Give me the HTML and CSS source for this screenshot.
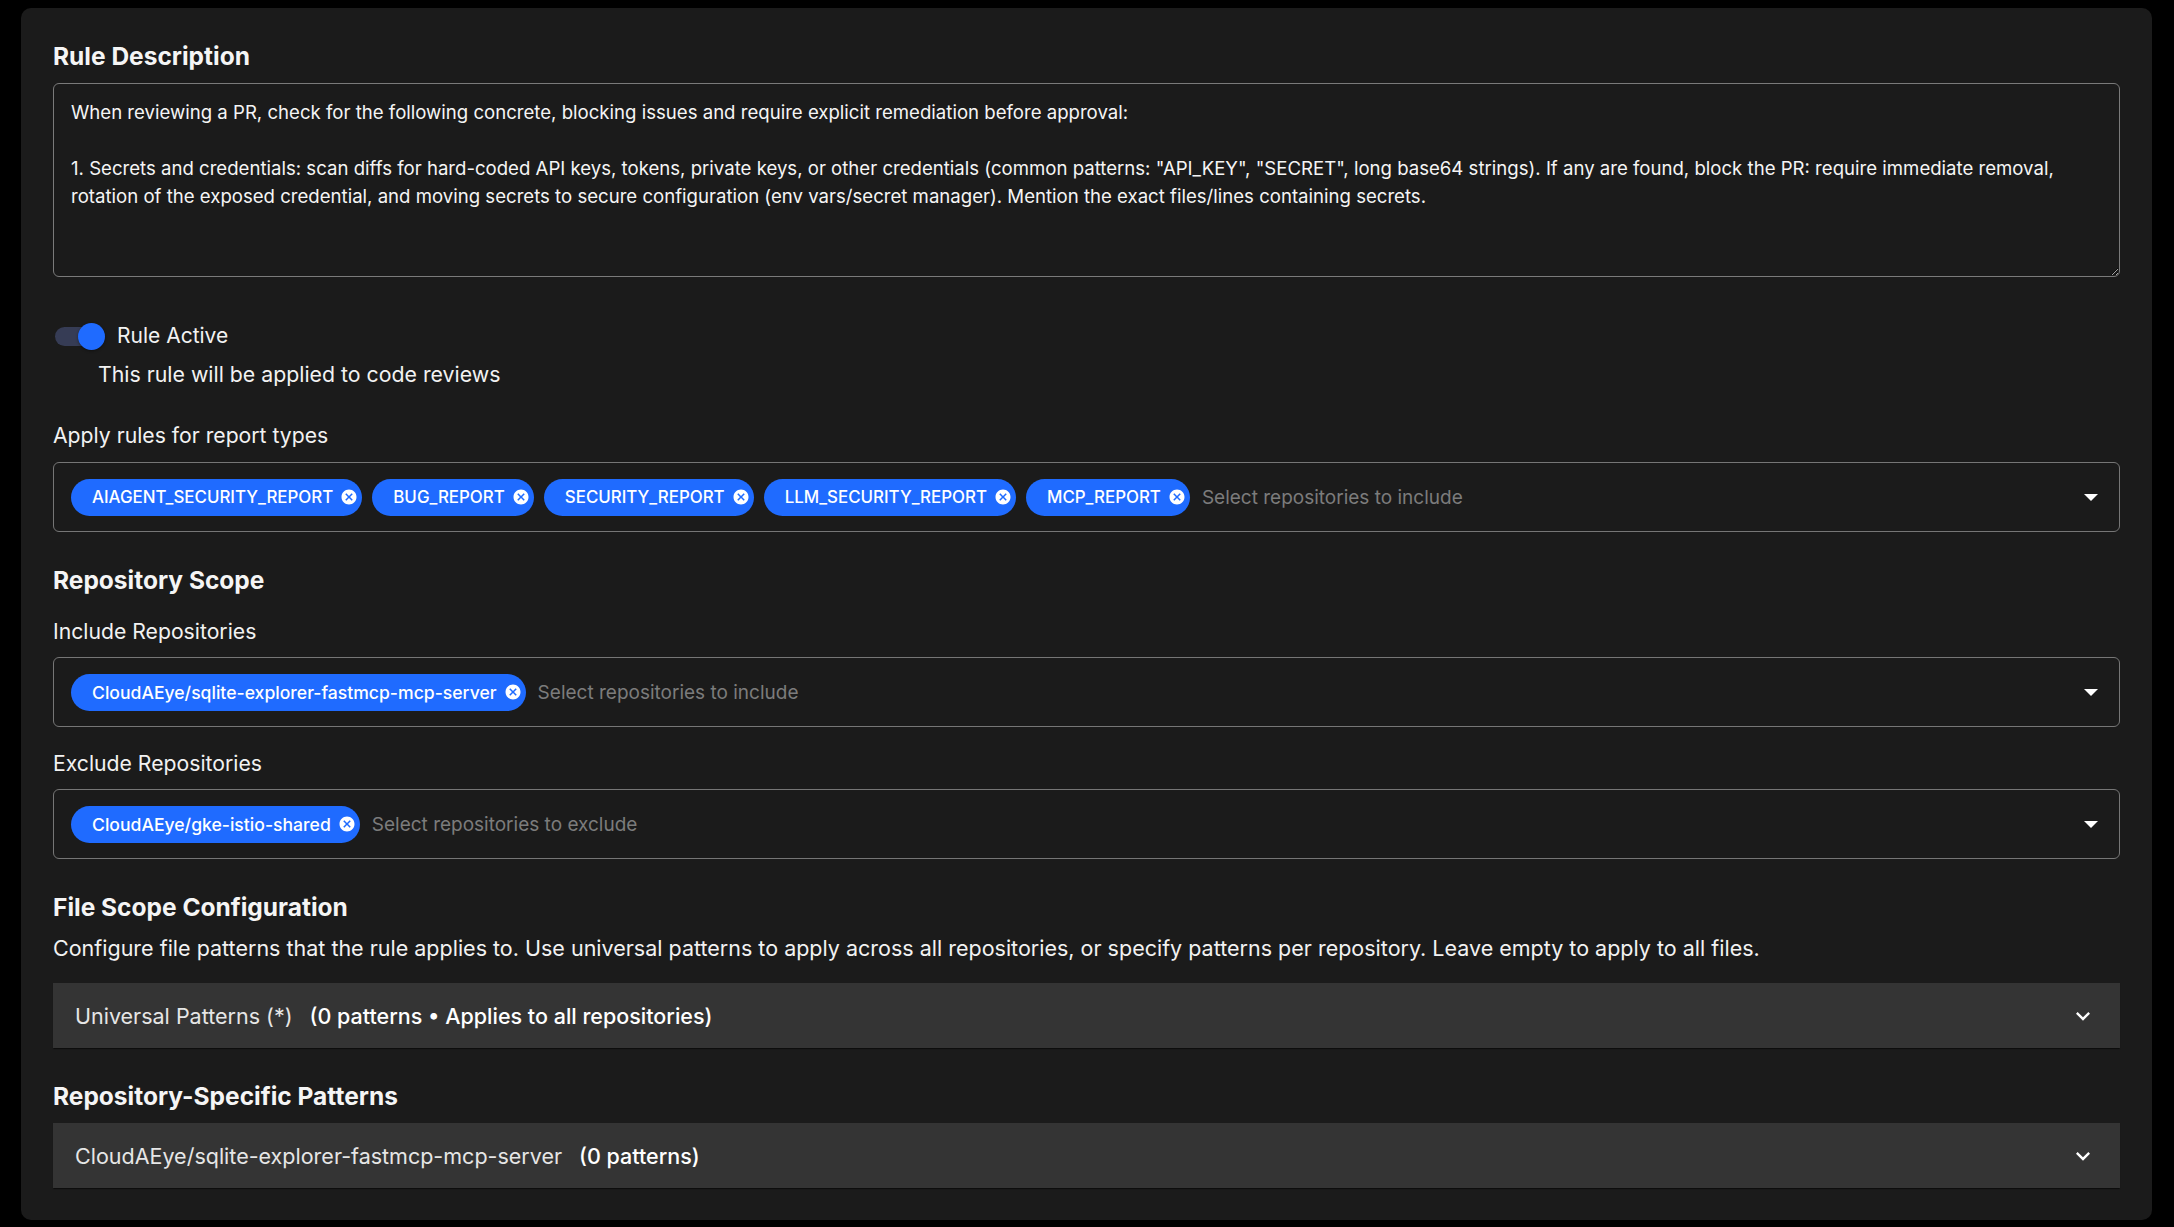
FILE: index.html
```html
<!DOCTYPE html>
<html lang="en">
<head>
    <meta charset="UTF-8">
    <meta name="viewport" content="width=device-width, initial-scale=1.0">
    <title>Edit Rule</title>
    <link rel="stylesheet" href="styles.css">
</head>
<body>
    <div class="card">
        <h2 class="section-title first">Rule Description</h2>
        <textarea class="description" spellcheck="false">When reviewing a PR, check for the following concrete, blocking issues and require explicit remediation before approval:

1. Secrets and credentials: scan diffs for hard-coded API keys, tokens, private keys, or other credentials (common patterns: "API_KEY", "SECRET", long base64 strings). If any are found, block the PR: require immediate removal, rotation of the exposed credential, and moving secrets to secure configuration (env vars/secret manager). Mention the exact files/lines containing secrets.</textarea>

        <div class="switch-row">
            <span class="switch">
                <span class="switch-track"></span>
                <span class="switch-thumb"></span>
            </span>
            <span class="switch-label">Rule Active</span>
        </div>
        <p class="helper">This rule will be applied to code reviews</p>

        <div class="field-label spaced">Apply rules for report types</div>
        <div class="select-box">
            <span class="chip">AIAGENT_SECURITY_REPORT<svg class="chip-delete" viewBox="0 0 24 24"><path d="M12 2C6.47 2 2 6.47 2 12s4.47 10 10 10 10-4.47 10-10S17.53 2 12 2zm5 13.59L15.59 17 12 13.41 8.41 17 7 15.59 10.59 12 7 8.41 8.41 7 12 10.59 15.59 7 17 8.41 13.41 12 17 15.59z"/></svg></span>
            <span class="chip">BUG_REPORT<svg class="chip-delete" viewBox="0 0 24 24"><path d="M12 2C6.47 2 2 6.47 2 12s4.47 10 10 10 10-4.47 10-10S17.53 2 12 2zm5 13.59L15.59 17 12 13.41 8.41 17 7 15.59 10.59 12 7 8.41 8.41 7 12 10.59 15.59 7 17 8.41 13.41 12 17 15.59z"/></svg></span>
            <span class="chip">SECURITY_REPORT<svg class="chip-delete" viewBox="0 0 24 24"><path d="M12 2C6.47 2 2 6.47 2 12s4.47 10 10 10 10-4.47 10-10S17.53 2 12 2zm5 13.59L15.59 17 12 13.41 8.41 17 7 15.59 10.59 12 7 8.41 8.41 7 12 10.59 15.59 7 17 8.41 13.41 12 17 15.59z"/></svg></span>
            <span class="chip">LLM_SECURITY_REPORT<svg class="chip-delete" viewBox="0 0 24 24"><path d="M12 2C6.47 2 2 6.47 2 12s4.47 10 10 10 10-4.47 10-10S17.53 2 12 2zm5 13.59L15.59 17 12 13.41 8.41 17 7 15.59 10.59 12 7 8.41 8.41 7 12 10.59 15.59 7 17 8.41 13.41 12 17 15.59z"/></svg></span>
            <span class="chip">MCP_REPORT<svg class="chip-delete" viewBox="0 0 24 24"><path d="M12 2C6.47 2 2 6.47 2 12s4.47 10 10 10 10-4.47 10-10S17.53 2 12 2zm5 13.59L15.59 17 12 13.41 8.41 17 7 15.59 10.59 12 7 8.41 8.41 7 12 10.59 15.59 7 17 8.41 13.41 12 17 15.59z"/></svg></span>
            <span class="placeholder">Select repositories to include</span>
            <svg class="caret" viewBox="0 0 14 7"><polygon points="0,0 14,0 7,7"/></svg>
        </div>

        <h2 class="section-title">Repository Scope</h2>
        <div class="field-label">Include Repositories</div>
        <div class="select-box">
            <span class="chip repo">CloudAEye/sqlite-explorer-fastmcp-mcp-server<svg class="chip-delete" viewBox="0 0 24 24"><path d="M12 2C6.47 2 2 6.47 2 12s4.47 10 10 10 10-4.47 10-10S17.53 2 12 2zm5 13.59L15.59 17 12 13.41 8.41 17 7 15.59 10.59 12 7 8.41 8.41 7 12 10.59 15.59 7 17 8.41 13.41 12 17 15.59z"/></svg></span>
            <span class="placeholder">Select repositories to include</span>
            <svg class="caret" viewBox="0 0 14 7"><polygon points="0,0 14,0 7,7"/></svg>
        </div>

        <div class="field-label">Exclude Repositories</div>
        <div class="select-box">
            <span class="chip repo">CloudAEye/gke-istio-shared<svg class="chip-delete" viewBox="0 0 24 24"><path d="M12 2C6.47 2 2 6.47 2 12s4.47 10 10 10 10-4.47 10-10S17.53 2 12 2zm5 13.59L15.59 17 12 13.41 8.41 17 7 15.59 10.59 12 7 8.41 8.41 7 12 10.59 15.59 7 17 8.41 13.41 12 17 15.59z"/></svg></span>
            <span class="placeholder">Select repositories to exclude</span>
            <svg class="caret" viewBox="0 0 14 7"><polygon points="0,0 14,0 7,7"/></svg>
        </div>

        <h2 class="section-title">File Scope Configuration</h2>
        <p class="section-text">Configure file patterns that the rule applies to. Use universal patterns to apply across all repositories, or specify patterns per repository. Leave empty to apply to all files.</p>
        <div class="accordion wide-gap">
            <span class="accordion-name">Universal Patterns (*)</span>
            <span class="accordion-count">(0 patterns • Applies to all repositories)</span>
            <svg class="chevron" viewBox="0 0 24 24"><path d="M16.59 8.59 12 13.17 7.41 8.59 6 10l6 6 6-6z"/></svg>
        </div>

        <h2 class="section-title">Repository-Specific Patterns</h2>
        <div class="accordion">
            <span class="accordion-name">CloudAEye/sqlite-explorer-fastmcp-mcp-server</span>
            <span class="accordion-count">(0 patterns)</span>
            <svg class="chevron" viewBox="0 0 24 24"><path d="M16.59 8.59 12 13.17 7.41 8.59 6 10l6 6 6-6z"/></svg>
        </div>
    </div>
</body>
</html>
```

FILE: styles.css
```css
* {
    box-sizing: border-box;
}

body {
    margin: 0;
    padding: 8px 22px 0 21px;
    background-color: #000;
    color: #f2f2f2;
    font-family: Inter, Roboto, "Liberation Sans", sans-serif;
    color-scheme: dark;
}

.card {
    background-color: #1b1b1b;
    border-radius: 10px;
    padding: 32px;
}

.section-title {
    margin: 32px 0 0;
    font-size: 24.5px;
    line-height: 32px;
    font-weight: 700;
    color: #f5f5f5;
}

.section-title.first {
    margin-top: 0;
}

.description {
    display: block;
    width: 100%;
    height: 194px;
    margin-top: 11px;
    padding: 14px 17px;
    background: transparent;
    border: 1px solid #7a7a7a;
    border-radius: 6px;
    color: #f5f5f5;
    font-family: inherit;
    font-size: 18.6px;
    line-height: 28px;
    outline: none;
}

.switch-row {
    display: flex;
    align-items: center;
    height: 32px;
    margin-top: 43px;
    padding-left: 2px;
}

.switch {
    position: relative;
    width: 50px;
    height: 27px;
}

.switch-track {
    position: absolute;
    left: 0;
    top: 4px;
    width: 46px;
    height: 19px;
    border-radius: 10px;
    background-color: #363c55;
}

.switch-thumb {
    position: absolute;
    right: 0;
    top: 0;
    width: 27px;
    height: 27px;
    border-radius: 50%;
    background-color: #1f6bff;
    box-shadow: 0 1px 3px rgba(0, 0, 0, 0.4);
}

.switch-label {
    margin-left: 12px;
    font-size: 21px;
    line-height: 28px;
}

.helper {
    margin: 8px 0 0;
    padding-left: 45px;
    font-size: 21.3px;
    line-height: 28px;
}

.field-label {
    margin-top: 21px;
    font-size: 21.2px;
    line-height: 28px;
}

.field-label.spaced {
    margin-top: 33px;
}

.select-box + .field-label {
    margin-top: 22px;
}

.select-box {
    display: flex;
    align-items: center;
    gap: 10px;
    height: 70px;
    margin-top: 12px;
    padding: 0 21px 0 17px;
    border: 1px solid #767676;
    border-radius: 6px;
}

.field-label.spaced + .select-box {
    margin-top: 13px;
}

.chip {
    display: inline-flex;
    align-items: center;
    height: 37px;
    padding: 0 4px 0 21px;
    border-radius: 19px;
    background-color: #1f6bff;
    color: #fff;
    font-size: 16.9px;
    font-weight: 500;
    white-space: nowrap;
}

.chip.repo {
    font-size: 17.6px;
}

.chip-delete {
    width: 18px;
    height: 18px;
    margin-left: 7px;
    fill: #fff;
}

.placeholder {
    margin-left: 2px;
    color: #7c7c7c;
    font-size: 19px;
}

.caret {
    width: 14px;
    height: 7px;
    margin-left: auto;
    fill: #fff;
}

.section-text {
    margin: 11px 0 0;
    font-size: 21.5px;
    line-height: 28px;
}

.accordion {
    display: flex;
    align-items: center;
    height: 65px;
    margin-top: 11px;
    padding: 0 23px 0 22px;
    background-color: #343434;
    box-shadow: 0 2px 1px -1px rgba(0, 0, 0, 0.35), 0 1px 1px 0 rgba(0, 0, 0, 0.2);
    font-size: 21.5px;
}

.accordion.wide-gap {
    margin-top: 21px;
}

.accordion-name {
    color: #e6e6e6;
}

.accordion-count {
    margin-left: 17px;
    font-weight: 500;
    color: #fff;
}

.chevron {
    width: 28px;
    height: 28px;
    margin-left: auto;
    fill: #fff;
}
```
